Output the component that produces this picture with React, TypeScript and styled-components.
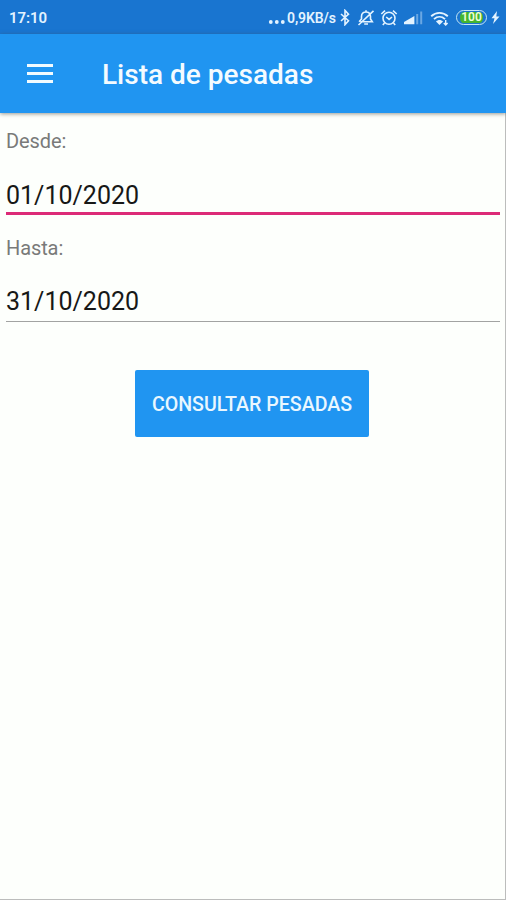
import React from "react";
import styled, { createGlobalStyle } from "styled-components";

const GlobalStyle = createGlobalStyle`
  * { box-sizing: border-box; }
  body { margin: 0; background: #fdfffc; font-family: Roboto, sans-serif; }
`;

const Screen = styled.div`
  display: flex;
  flex-direction: column;
  width: 506px;
  height: 900px;
  background: #fdfffc;
  overflow: hidden;
`;

const StatusBar = styled.div`
  display: flex;
  flex: none;
  align-items: center;
  justify-content: space-between;
  height: 34px;
  padding: 1px 4px 0 9px;
  background: #1975d0;
  color: #e3f3ff;
`;

const Clock = styled.span`
  font-size: 15px;
  font-weight: 600;
  letter-spacing: -0.1px;
`;

const StatusIcons = styled.div`
  display: flex;
  align-items: center;
  width: 234px;
`;

const Speed = styled.span`
  width: 51px;
  margin-left: 2px;
  font-size: 14px;
  font-weight: 600;
  letter-spacing: -0.1px;
  white-space: nowrap;
`;

const Glyph = styled.svg<{ $gap?: number }>`
  display: block;
  flex: none;
  margin-left: ${({ $gap = 0 }) => $gap}px;
  fill: none;
  stroke: currentColor;
`;

const Battery = styled.span`
  display: flex;
  flex: none;
  align-items: center;
  justify-content: center;
  width: 31px;
  height: 15px;
  margin-left: 6px;
  border: 1.5px solid #c4e5f4;
  border-radius: 8px;
  background: #45b52f;
  background-clip: content-box;
  padding: 1px 3px;
  color: #efffd9;
  font-size: 12px;
  font-weight: 600;
  line-height: 11px;
`;

const AppBar = styled.header`
  position: relative;
  display: flex;
  flex: none;
  align-items: center;
  height: 79px;
  padding: 0 27px;
  background: #2095f1;
  box-shadow: 0 1px 4px rgba(70, 70, 60, 0.55);
`;

const MenuButton = styled.button`
  display: flex;
  flex-direction: column;
  gap: 5px;
  width: 26px;
  margin-right: 49px;
  padding: 0;
  border: 0;
  background: none;
`;

const MenuLine = styled.span`
  display: block;
  width: 26px;
  height: 3px;
  background: #f2fbff;
`;

const Title = styled.h1`
  margin: 2px 0 0;
  color: #f4fbff;
  font-size: 28px;
  font-weight: 500;
  line-height: 34px;
`;

const Content = styled.main`
  display: flex;
  flex: 1;
  flex-direction: column;
  padding: 16px 5px 0 6px;
  border-right: 1px solid #bcbdbc;
  border-bottom: 1px solid #bcbdbc;
`;

const Field = styled.label`
  display: flex;
  flex-direction: column;
  height: 107px;
`;

const Caption = styled.span`
  height: 24px;
  color: #797a79;
  font-size: 20px;
  line-height: 25px;
  letter-spacing: -0.1px;
`;

const DateInput = styled.input<{ $active?: boolean }>`
  width: 100%;
  height: 62px;
  padding: ${({ $active }) => ($active ? 25 : 22)}px 0 0;
  border: 0;
  border-bottom: ${({ $active }) => ($active ? "3px solid #dc2a77" : "1px solid #a2a3a2")};
  border-radius: 0;
  outline: 0;
  background: transparent;
  color: #171817;
  font: 25px/34px Roboto, sans-serif;
`;

const SubmitButton = styled.button`
  align-self: flex-start;
  width: 234px;
  height: 67px;
  margin: 27px 0 0 129px;
  padding: 2px 0 0;
  border: 0;
  border-radius: 2px;
  background: #2095f1;
  color: #e9f7ff;
  font: 500 19.6px/24px Roboto, sans-serif;
  white-space: nowrap;
`;

const DotsIcon = () => (
  <Glyph width="17" height="16" viewBox="0 0 17 16">
    <g fill="currentColor" stroke="none">
      <circle cx="2.8" cy="12" r="1.9" />
      <circle cx="8.8" cy="12" r="1.9" />
      <circle cx="14.8" cy="12" r="1.9" />
    </g>
  </Glyph>
);

const BluetoothIcon = () => (
  <Glyph $gap={2} width="10" height="17" viewBox="0 0 10 17" strokeWidth="1.6">
    <path d="M1 5 8.5 11.7 5 15.6V1.4l3.5 3.8L1 12" />
  </Glyph>
);

const MuteIcon = () => (
  <Glyph $gap={7} width="18" height="18" viewBox="0 0 18 18" strokeWidth="1.6">
    <path d="M3.5 12.8h11.8L13.5 10V7.4C13.5 4.5 11.7 3 9 3S4.5 4.7 4.5 7.4V10l-2.4 2.8M9 1.3V3M7.2 15h3.8M1.5 16 16.5 1.8" />
  </Glyph>
);

const AlarmIcon = () => (
  <Glyph $gap={5} width="18" height="18" viewBox="0 0 18 18" strokeWidth="1.6">
    <circle cx="9" cy="9.3" r="6" />
    <path d="m6.2 8 2.9 2.4L12 8M1.3 5 5 1.6M16.7 5 13 1.6M4.5 14l-1.7 2M13.5 14l1.7 2" />
  </Glyph>
);

const SignalIcon = () => (
  <Glyph $gap={6} width="19" height="15" viewBox="0 0 19 15">
    <path d="M0 14.2V12l10.4-6v8.2Z" fill="currentColor" stroke="none" />
    <path d="M13.2 4v10.2M17.2 1.4v12.8" strokeWidth="2" opacity=".4" />
  </Glyph>
);

const WifiIcon = () => (
  <Glyph $gap={7} width="20" height="16" viewBox="0 0 20 16" strokeWidth="1.9">
    <path d="M1.2 6.2c4.9-4.5 11.7-4.5 16.6 0M4 9.1c3.3-3 7.7-3 11 0" />
    <path d="M6 11.4c2.1-2 4.9-2 7 0L9.5 15Z" fill="currentColor" stroke="none" />
    <path d="M15.7 10v5M13.8 13l1.9 2 1.9-2" strokeWidth="1.4" />
  </Glyph>
);

const ChargeIcon = () => (
  <Glyph $gap={4} width="9" height="15" viewBox="0 0 9 15">
    <path d="M6 1 0.5 8.3h3L2 14l6.5-7.6h-3.2Z" fill="currentColor" stroke="none" />
  </Glyph>
);

export default function App() {
  return (
    <Screen>
      <GlobalStyle />
      <StatusBar>
        <Clock>17:10</Clock>
        <StatusIcons>
          <DotsIcon />
          <Speed>0,9KB/s</Speed>
          <BluetoothIcon />
          <MuteIcon />
          <AlarmIcon />
          <SignalIcon />
          <WifiIcon />
          <Battery>100</Battery>
          <ChargeIcon />
        </StatusIcons>
      </StatusBar>
      <AppBar>
        <MenuButton aria-label="Menú">
          <MenuLine />
          <MenuLine />
          <MenuLine />
        </MenuButton>
        <Title>Lista de pesadas</Title>
      </AppBar>
      <Content>
        <Field>
          <Caption>Desde:</Caption>
          <DateInput $active defaultValue="01/10/2020" />
        </Field>
        <Field>
          <Caption>Hasta:</Caption>
          <DateInput defaultValue="31/10/2020" />
        </Field>
        <SubmitButton>CONSULTAR PESADAS</SubmitButton>
      </Content>
    </Screen>
  );
}
